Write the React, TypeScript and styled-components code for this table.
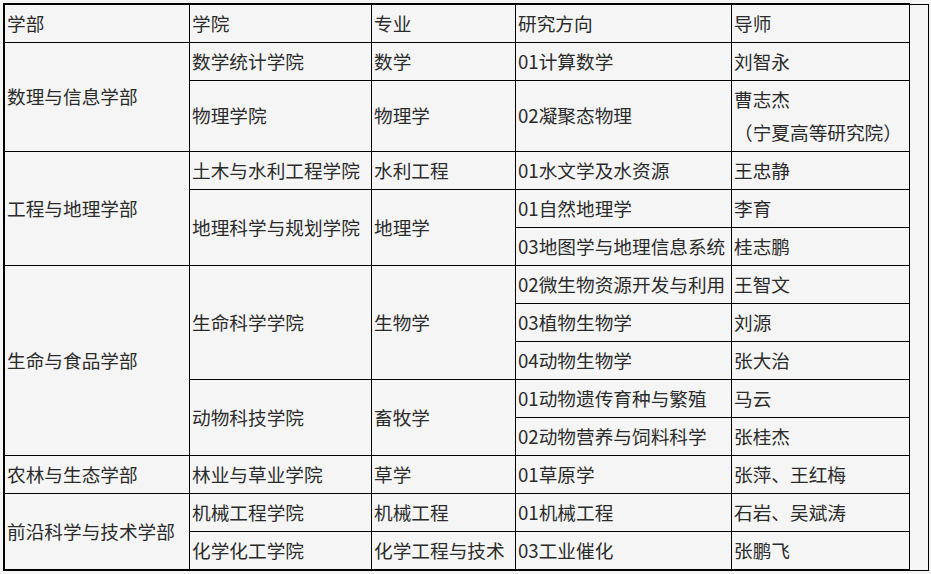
import React from "react";
import styled, { createGlobalStyle } from "styled-components";

const Global = createGlobalStyle`
  html, body { margin: 0; padding: 0; background: #f5f5f5; }
  body {
    font-family: "Microsoft YaHei", "Noto Sans CJK SC", "Noto Sans", sans-serif;
    color: #2b2b2b;
  }
`;

const Wrap = styled.div`
  display: flex;
  align-items: stretch;
  margin: 3px 0 0 3px;
`;

const Grid = styled.div`
  display: grid;
  grid-template-columns: 185px 182px 144px 216px 178px;
  grid-template-rows: 38px 38px 71px repeat(11, 38px);
  border-top: 2px solid #000;
  border-left: 2px solid #000;
  border-bottom: 1px solid #000;
`;

const Cell = styled.div<{ $col: number; $row: number; $span: number }>`
  grid-column: ${(p) => p.$col};
  grid-row: ${(p) => p.$row} / span ${(p) => p.$span};
  box-sizing: border-box;
  border-right: 1px solid #000;
  border-bottom: 1px solid #000;
  padding: 0 2px 3px 2px;
  display: flex;
  flex-direction: column;
  justify-content: center;
  font-size: 18.67px;
  line-height: 33px;
  white-space: nowrap;
  overflow: hidden;
`;

const Extra = styled.div`
  box-sizing: border-box;
  width: 19px;
  margin-top: 1px;
  border-top: 1px solid #000;
  border-bottom: 1px solid #000;
  border-right: 1px solid #000;
`;

type C = [number, number, number, string];

const cells: C[] = [
  [1, 1, 1, "学部"],
  [2, 1, 1, "学院"],
  [3, 1, 1, "专业"],
  [4, 1, 1, "研究方向"],
  [5, 1, 1, "导师"],

  [1, 2, 2, "数理与信息学部"],
  [1, 4, 3, "工程与地理学部"],
  [1, 7, 5, "生命与食品学部"],
  [1, 12, 1, "农林与生态学部"],
  [1, 13, 2, "前沿科学与技术学部"],

  [2, 2, 1, "数学统计学院"],
  [2, 3, 1, "物理学院"],
  [2, 4, 1, "土木与水利工程学院"],
  [2, 5, 2, "地理科学与规划学院"],
  [2, 7, 3, "生命科学学院"],
  [2, 10, 2, "动物科技学院"],
  [2, 12, 1, "林业与草业学院"],
  [2, 13, 1, "机械工程学院"],
  [2, 14, 1, "化学化工学院"],

  [3, 2, 1, "数学"],
  [3, 3, 1, "物理学"],
  [3, 4, 1, "水利工程"],
  [3, 5, 2, "地理学"],
  [3, 7, 3, "生物学"],
  [3, 10, 2, "畜牧学"],
  [3, 12, 1, "草学"],
  [3, 13, 1, "机械工程"],
  [3, 14, 1, "化学工程与技术"],

  [4, 2, 1, "01计算数学"],
  [4, 3, 1, "02凝聚态物理"],
  [4, 4, 1, "01水文学及水资源"],
  [4, 5, 1, "01自然地理学"],
  [4, 6, 1, "03地图学与地理信息系统"],
  [4, 7, 1, "02微生物资源开发与利用"],
  [4, 8, 1, "03植物生物学"],
  [4, 9, 1, "04动物生物学"],
  [4, 10, 1, "01动物遗传育种与繁殖"],
  [4, 11, 1, "02动物营养与饲料科学"],
  [4, 12, 1, "01草原学"],
  [4, 13, 1, "01机械工程"],
  [4, 14, 1, "03工业催化"],

  [5, 2, 1, "刘智永"],
  [5, 3, 1, "曹志杰\n（宁夏高等研究院）"],
  [5, 4, 1, "王忠静"],
  [5, 5, 1, "李育"],
  [5, 6, 1, "桂志鹏"],
  [5, 7, 1, "王智文"],
  [5, 8, 1, "刘源"],
  [5, 9, 1, "张大治"],
  [5, 10, 1, "马云"],
  [5, 11, 1, "张桂杰"],
  [5, 12, 1, "张萍、王红梅"],
  [5, 13, 1, "石岩、吴斌涛"],
  [5, 14, 1, "张鹏飞"],
];

export default function App() {
  return (
    <>
      <Global />
      <Wrap>
        <Grid>
          {cells.map(([col, row, span, text], i) => (
            <Cell key={i} $col={col} $row={row} $span={span}>
              {text.split("\n").map((line, j) => (
                <span key={j}>{line}</span>
              ))}
            </Cell>
          ))}
        </Grid>
        <Extra />
      </Wrap>
    </>
  );
}
